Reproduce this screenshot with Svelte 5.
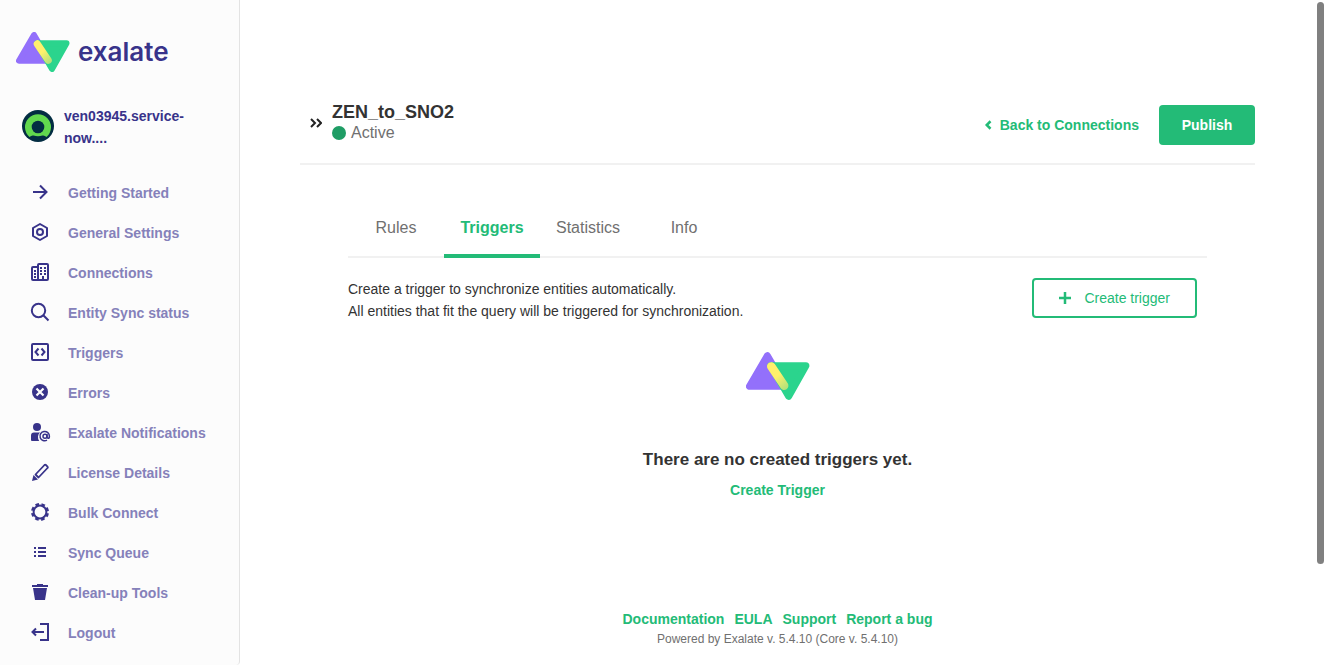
<script>
  const instance = 'ven03945.service-now....'

  const menu = [
    { label: 'Getting Started', icon: 'arrow' },
    { label: 'General Settings', icon: 'settings' },
    { label: 'Connections', icon: 'buildings' },
    { label: 'Entity Sync status', icon: 'search' },
    { label: 'Triggers', icon: 'code' },
    { label: 'Errors', icon: 'error' },
    { label: 'Exalate Notifications', icon: 'user' },
    { label: 'License Details', icon: 'pencil' },
    { label: 'Bulk Connect', icon: 'gear' },
    { label: 'Sync Queue', icon: 'list' },
    { label: 'Clean-up Tools', icon: 'trash' },
    { label: 'Logout', icon: 'logout' }
  ]

  const tabs = ['Rules', 'Triggers', 'Statistics', 'Info']
  let active = $state('Triggers')

  const footerLinks = ['Documentation', 'EULA', 'Support', 'Report a bug']
</script>

{#snippet logo(id)}
  <svg class="mark" viewBox="0 0 54 40" aria-hidden="true">
    <defs>
      <linearGradient id={id} gradientUnits="userSpaceOnUse" x1="24" y1="18" x2="34" y2="30">
        <stop offset="0.2" stop-color="#fff06c" />
        <stop offset="1" stop-color="#b4e27a" />
      </linearGradient>
    </defs>
    <g stroke-width="6" stroke-linejoin="round" stroke-linecap="round">
      <path d="M18 3 3 28.700h30z" fill="#9370fb" stroke="#9370fb" />
      <path d="M21 11.300h29.500L36 37z" fill="#2bd48d" stroke="#2bd48d" />
      <path d="M21.300 11.900 32.200 28.200" stroke="url(#{id})" stroke-width="7.200" />
    </g>
  </svg>
{/snippet}

{#snippet icon(name)}
  <svg class="icon" viewBox="0 0 24 24" fill="none" stroke="currentColor" stroke-width="2" aria-hidden="true">
    {#if name === 'arrow'}
      <path d="M5 12h13M12 5.500l6.500 6.500-6.500 6.500" />
    {:else if name === 'settings'}
      <path d="M12 4l7 4v8l-7 4-7-4V8z" stroke-linejoin="round" />
      <circle cx="12" cy="12" r="3" />
    {:else if name === 'buildings'}
      <path d="M10 20V5q0-1 1-1h8q1 0 1 1v14q0 1-1 1zM9 7H5Q4 7 4 8v11q0 1 1 1h4" />
      <path d="M12 8h2m2 0h2m-6 3h2m2 0h2m-6 3h2m2 0h2M6 11h2m-2 3h2m-2 3h2M15 20v-4" />
    {:else if name === 'search'}
      <circle cx="10.500" cy="10.500" r="6.700" />
      <path d="M15.300 15.300l5.200 5.200" />
    {:else if name === 'code'}
      <rect x="4" y="4" width="16" height="16" rx="1" />
      <path d="M10.500 8.500L7.500 12l3 3.500M13.500 8.500l3 3.500-3 3.500" />
    {:else if name === 'error'}
      <circle cx="12" cy="12" r="8" fill="currentColor" stroke="none" />
      <path d="M8.500 8.500l7 7M15.500 8.500l-7 7" stroke="#fcfcfc" stroke-width="2.200" />
    {:else if name === 'user'}
      <g fill="currentColor" stroke="none">
        <circle cx="9" cy="7" r="4" />
        <path d="M3 20v-4.500q0-3 3-3h6a6.400 6.400 0 0 0-.8 8.500H4q-1 0-1-1z" />
      </g>
      <g stroke-width="1.500">
        <circle cx="17" cy="16.200" r="2" />
        <path d="M19 14v2.800q0 1.500 1.200 1.500t1.200-2.100a4.700 4.700 0 1 0-2.400 4" />
      </g>
    {:else if name === 'pencil'}
      <path d="M7.500 14.500L16.500 5q.7-.7 1.400 0l1.600 1.600q.7.7 0 1.400L10.500 17.500z" stroke-width="1.800" stroke-linejoin="round" />
      <path d="M5.500 15l4.500 4.500-6 1.500z" fill="currentColor" stroke="none" />
    {:else if name === 'gear'}
      <circle cx="12" cy="12" r="6.400" stroke-width="2" />
      <circle cx="12" cy="12" r="7.800" stroke-width="2.400" stroke-dasharray="3.600 2.526" stroke-dashoffset="-1.260" />
    {:else if name === 'list'}
      <path d="M6 8h2m2 0h8M6 12h2m2 0h8M6 16h2m2 0h8" />
    {:else if name === 'trash'}
      <path d="M4 5h5V4h6v1h5v2H4zM5 8h14l-2 12H7z" fill="currentColor" stroke="none" />
    {:else if name === 'logout'}
      <path d="M12 4h8v16h-8M5 12h11M8 8.500L4.500 12 8 15.500" />
    {/if}
  </svg>
{/snippet}

<div class="app">
  <aside class="sidebar">
    <a class="brand" href="#home">
      {@render logo('bar-small')}
      <span>exalate</span>
    </a>

    <div class="instance">
      <svg viewBox="0 0 32 32" aria-hidden="true">
        <circle cx="16" cy="16" r="16" fill="#032d42" />
        <path d="M7.500 27a13 13 0 1 1 17 0q-2-2-4-1.500-4.500 1.500-9 0-2-.5-4 1.500z" fill="#62d84e" />
        <circle cx="16" cy="17" r="6.300" fill="#032d42" />
      </svg>
      <span>{instance}</span>
    </div>

    <nav class="menu">
      {#each menu as item}
        <a href="#{item.icon}">
          {@render icon(item.icon)}
          <span>{item.label}</span>
        </a>
      {/each}
    </nav>
  </aside>

  <main>
    <header class="head">
      <button class="toggle" aria-label="Expand">
        <svg viewBox="0 0 12 10" aria-hidden="true"><path d="M1 1l4 4-4 4M7 1l4 4-4 4" /></svg>
      </button>
      <div class="title">
        <h1>ZEN_to_SNO2</h1>
        <p><i class="dot"></i>Active</p>
      </div>
      <a class="back" href="#connections">
        <svg viewBox="0 0 6 8" aria-hidden="true"><path d="M5 1L2 4l3 3" /></svg>
        Back to Connections
      </a>
      <button class="publish">Publish</button>
    </header>

    <section class="content">
      <div class="tabs" role="tablist">
        {#each tabs as tab}
          <button role="tab" aria-selected={active === tab} class:active={active === tab} onclick={() => (active = tab)}>
            {tab}
          </button>
        {/each}
      </div>

      <div class="intro">
        <p>
          Create a trigger to synchronize entities automatically.<br />
          All entities that fit the query will be triggered for synchronization.
        </p>
        <button class="create">
          <svg viewBox="0 0 12 12" aria-hidden="true"><path d="M6 0v12M0 6h12" /></svg>
          Create trigger
        </button>
      </div>

      <div class="empty">
        {@render logo('bar-large')}
        <h2>There are no created triggers yet.</h2>
        <a href="#create">Create Trigger</a>
      </div>
    </section>

    <footer>
      <nav>
        {#each footerLinks as link}
          <a href="#footer">{link}</a>
        {/each}
      </nav>
      <p>Powered by Exalate v. 5.4.10 (Core v. 5.4.10)</p>
    </footer>
  </main>

  <div class="scrollbar"></div>
</div>

<style>
  :global(body) {
    background: #fff;
  }

  .app {
    --green: #23bb77;
    --navy: #38338a;
    display: flex;
    min-height: 100vh;
    font-family: "Liberation Sans", Arial, sans-serif;
    font-size: 14px;
    line-height: 22px;
    color: #333;
  }

  h1, h2, p {
    margin: 0;
  }

  a {
    color: var(--green);
    font-weight: 700;
    text-decoration: none;
  }

  button {
    padding: 0;
    border: 0;
    background: none;
    font: inherit;
    cursor: pointer;
  }

  .sidebar {
    flex: none;
    box-sizing: border-box;
    width: 240px;
    padding-top: 32px;
    border-right: 1px solid #e3e3e3;
    border-bottom-right-radius: 4px;
    background: #fcfcfc;
  }

  .brand {
    display: flex;
    align-items: center;
    gap: 8px;
    height: 40px;
    padding-left: 16px;
    color: var(--navy);
    font: 600 26px/38px Inter, sans-serif;
  }

  .brand .mark {
    width: 54px;
  }

  .instance {
    display: flex;
    align-items: center;
    gap: 10px;
    margin-top: 31px;
    padding: 0 50px 0 22px;
    color: var(--navy);
    font-weight: 700;
  }

  .instance svg {
    flex: none;
    width: 32px;
    height: 32px;
  }

  .instance span,
  .menu span {
    padding-top: 2px;
  }

  .menu {
    margin-top: 23px;
  }

  .menu a {
    display: flex;
    align-items: center;
    gap: 16px;
    height: 40px;
    padding-left: 28px;
    color: #8581ba;
  }

  .icon {
    width: 24px;
    height: 24px;
    color: var(--navy);
  }

  main {
    flex: 1;
    display: flex;
    flex-direction: column;
    margin-right: 11px;
    padding: 0 60px;
  }

  .head {
    display: flex;
    align-items: center;
    margin-top: 100px;
    padding: 0 0 13px 10px;
    height: 50px;
    border-bottom: 2px solid #f1f1f1;
  }

  .toggle {
    width: 12px;
    padding-bottom: 4px;
    line-height: 0;
  }

  .toggle svg {
    width: 12px;
    height: 10px;
    fill: none;
    stroke: #222;
    stroke-width: 2;
  }

  .title {
    flex: 1;
    margin-left: 10px;
    padding-bottom: 6px;
  }

  h1 {
    font-size: 18px;
    line-height: 22px;
  }

  h2 {
    font-size: 17px;
    line-height: 22px;
  }

  .title p {
    display: flex;
    align-items: center;
    gap: 5px;
    font-size: 16px;
    line-height: 20px;
    color: #707070;
  }

  .dot {
    width: 14px;
    height: 14px;
    border-radius: 50%;
    background: #1f9d65;
  }

  .back {
    display: flex;
    align-items: center;
    gap: 8px;
    margin-right: 20px;
  }

  .back svg {
    width: 8px;
    height: 10px;
    fill: none;
    stroke: currentColor;
    stroke-width: 2;
  }

  .publish {
    width: 96px;
    height: 40px;
    border-radius: 4px;
    background: var(--green);
    color: #fff;
    font-weight: 700;
  }

  .content {
    padding: 33px 48px 0;
  }

  .tabs {
    display: flex;
    border-bottom: 2px solid #f1f1f1;
  }

  .tabs button {
    width: 96px;
    height: 60px;
    margin-bottom: -2px;
    padding-top: 4px;
    border-bottom: 4px solid transparent;
    color: #707070;
    font-size: 16px;
  }

  .tabs .active {
    border-color: var(--green);
    color: var(--green);
    font-weight: 700;
  }

  .intro {
    display: flex;
    justify-content: space-between;
    padding: 20px 10px 0 0;
  }

  .create {
    display: flex;
    align-items: center;
    gap: 13px;
    box-sizing: border-box;
    height: 40px;
    padding: 0 25px;
    border: 2px solid var(--green);
    border-radius: 4px;
    color: var(--green);
  }

  .create svg {
    width: 12px;
    height: 12px;
    stroke: currentColor;
    stroke-width: 2.500;
  }

  .empty {
    display: flex;
    flex-direction: column;
    align-items: center;
    padding-top: 30px;
    text-align: center;
  }

  .empty .mark {
    width: 64px;
    height: 48px;
  }

  .empty h2 {
    margin: 49px 0 8px;
  }

  footer {
    margin-top: auto;
    padding-bottom: 17px;
    text-align: center;
    font-size: 12px;
    line-height: 18px;
    color: #707070;
  }

  footer nav {
    display: flex;
    justify-content: center;
    gap: 10px;
    font-size: 14px;
    line-height: 22px;
  }

  .scrollbar {
    position: fixed;
    top: 2px;
    right: 2px;
    width: 7px;
    height: 562px;
    border-radius: 4px;
    background: #808080;
  }
</style>
